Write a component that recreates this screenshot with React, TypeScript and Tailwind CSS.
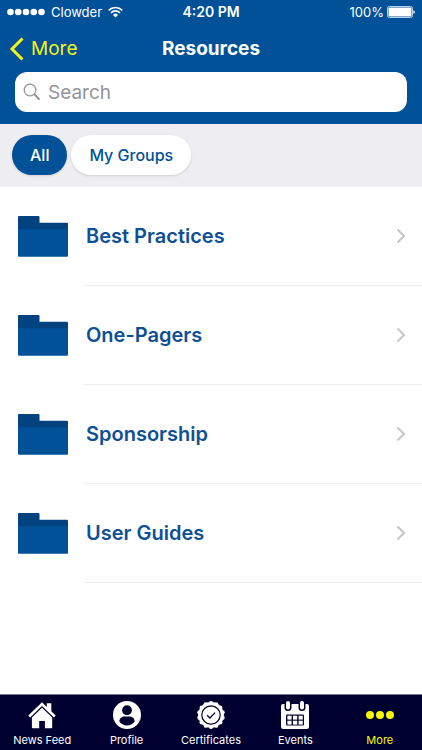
import type { ReactNode } from "react";

const FOLDERS = ["Best Practices", "One-Pagers", "Sponsorship", "User Guides"];

const BADGE_ANGLES = Array.from({ length: 14 }, (_, i) => (i * 2 * Math.PI) / 14);

function WifiIcon() {
  return (
    <svg viewBox="0 0 15 12" className="w-[15px] h-3" fill="none" stroke="currentColor" strokeWidth="1.7">
      <path d="M0.7 4.300a9.600 9.600 0 0 1 13.600 0" />
      <path d="M3 6.800a6.400 6.400 0 0 1 9 0" />
      <path d="M7.500 11.500 5 8.900a3.500 3.500 0 0 1 5 0Z" fill="currentColor" stroke="none" />
    </svg>
  );
}

function BatteryIcon() {
  return (
    <svg viewBox="0 0 28 12" className="w-7 h-3">
      <rect x="0.5" y="0.5" width="25" height="11" rx="1.8" fill="none" stroke="#b9cfe5" />
      <rect x="1.5" y="1.5" width="23" height="9" rx="0.8" fill="#fff" />
      <path d="M26.4 4.2c1 .2 1.4.9 1.4 1.8s-.4 1.6-1.4 1.8Z" fill="#fff" />
    </svg>
  );
}

function FolderIcon() {
  return (
    <svg viewBox="0 0 50 41" className="w-[50px] h-[41px] shrink-0">
      <path d="M1 0h19.500a1 1 0 0 1 1 1v5.700H49a1 1 0 0 1 1 1V15H0V1a1 1 0 0 1 1-1Z" fill="#02437f" />
      <path d="M0 13.300h50V39.700a1 1 0 0 1-1 1H1a1 1 0 0 1-1-1Z" fill="#015198" />
    </svg>
  );
}

function HomeIcon() {
  return (
    <svg viewBox="0 0 28 28" className="size-7" fill="currentColor">
      <path d="M14 1.200 18.800 5.900V2.200h4.500V10.300l4.400 4.300-1.800 1.900L14 4.900 2.100 16.500.3 14.600Z" />
      <path d="M14 6.700 24.200 16.600V26.300a1 1 0 0 1-1 1h-6.300v-7.200h-5.700v7.200H4.900a1 1 0 0 1-1-1V16.600Z" />
    </svg>
  );
}

function ProfileIcon() {
  return (
    <svg viewBox="0 0 28 28" className="size-7">
      <circle cx="14" cy="14" r="14" fill="currentColor" />
      <circle cx="14" cy="9.200" r="4.900" fill="#000030" />
      <path d="M6.400 20.500c0-3.600 2.600-5 5.200-5h4.800c2.600 0 5.200 1.400 5.200 5-1.300 2.400-4.200 3.900-7.600 3.900s-6.300-1.500-7.600-3.900Z" fill="#000030" />
    </svg>
  );
}

function CertificateIcon() {
  return (
    <svg viewBox="0 0 28 28" className="size-7" fill="none">
      <circle cx="14" cy="14" r="12.900" fill="currentColor" />
      {BADGE_ANGLES.map((a) => (
        <circle key={a} cx={14 + 11.8 * Math.sin(a)} cy={14 - 11.8 * Math.cos(a)} r="2.200" fill="currentColor" />
      ))}
      <circle cx="14" cy="14" r="9.200" stroke="#000030" strokeWidth="1.200" />
      <path d="m10.100 14.300 2.800 2.700 5.200-5.400" stroke="#000030" strokeWidth="1.300" />
    </svg>
  );
}

function CalendarIcon() {
  return (
    <svg viewBox="0 0 28 28" className="size-7">
      <rect x="0" y="3" width="28" height="25" rx="2.200" fill="currentColor" />
      <path d="M3.500 0h7v6.500a3.500 3.500 0 0 1-7 0ZM17.500 0h7v6.500a3.500 3.500 0 0 1-7 0Z" fill="#000030" />
      <rect x="5" y="0" width="4" height="8.500" rx="2" fill="currentColor" />
      <rect x="19" y="0" width="4" height="8.500" rx="2" fill="currentColor" />
      <rect x="5" y="13.500" width="18" height="11" rx="1" fill="#000030" />
      {[6.4, 12, 17.6].map((x) => (
        <g key={x} fill="currentColor">
          <rect x={x} y="14.700" width="4.200" height="3.900" />
          <rect x={x} y="19.700" width="4.200" height="3.900" />
        </g>
      ))}
    </svg>
  );
}

function MoreIcon() {
  return (
    <svg viewBox="0 0 28 28" className="size-7" fill="currentColor">
      <circle cx="4" cy="14" r="4" />
      <circle cx="14" cy="14" r="4" />
      <circle cx="24" cy="14" r="4" />
    </svg>
  );
}

const TABS: { label: string; icon: ReactNode; active?: boolean }[] = [
  { label: "News Feed", icon: <HomeIcon /> },
  { label: "Profile", icon: <ProfileIcon /> },
  { label: "Certificates", icon: <CertificateIcon /> },
  { label: "Events", icon: <CalendarIcon /> },
  { label: "More", icon: <MoreIcon />, active: true },
];

function StatusBar() {
  return (
    <div className="grid grid-cols-[1fr_auto_1fr] items-center h-6 px-[7px] text-[13px] leading-4">
      <div className="flex items-center gap-[6px]">
        <svg viewBox="0 0 38 8" className="w-[38px] h-2" fill="currentColor">
          {[3.5, 11.2, 19, 26.8, 34.5].map((x) => (
            <circle key={x} cx={x} cy="4" r="3.300" />
          ))}
        </svg>
        <span>Clowder</span>
        <WifiIcon />
      </div>
      <span className="text-center text-sm font-semibold">4:20 PM</span>
      <div className="flex items-center justify-end gap-[3px]">
        <span>100%</span>
        <BatteryIcon />
      </div>
    </div>
  );
}

export default function App() {
  return (
    <div className="min-h-screen flex flex-col bg-white font-['Inter','Liberation_Sans',sans-serif]">
      <header className="bg-[#015198] text-white pb-3">
        <StatusBar />
        <div className="grid grid-cols-[1fr_auto_1fr] items-center h-12 px-2 pt-[2px]">
          <a href="#more" className="flex items-center gap-[7px] text-[#f4f516] text-[19px]">
            <svg viewBox="0 0 16 24" className="w-4 h-6" fill="none" stroke="currentColor" strokeWidth="3">
              <path d="M14.500 1.500 4 12l10.500 10.500" />
            </svg>
            More
          </a>
          <h1 className="text-[19px] font-bold">Resources</h1>
        </div>
        <label className="flex items-center gap-[7px] h-10 mx-[15px] px-2 rounded-xl bg-white text-[#8e8e93]">
          <svg viewBox="0 0 18 18" className="w-[18px] h-[18px] shrink-0" fill="none" stroke="currentColor">
            <circle cx="7" cy="7" r="5.800" strokeWidth="1.200" />
            <path d="m11.300 11.300 5.200 5.200" strokeWidth="1.900" />
          </svg>
          <input
            type="search"
            aria-label="Search"
            placeholder="Search"
            className="flex-1 min-w-0 pt-[2px] bg-transparent text-[19px] text-gray-900 placeholder:text-[#949498] outline-none"
          />
        </label>
      </header>

      <div className="flex gap-1 px-3 pt-[11px] pb-3 bg-[#eeedf2] text-base font-medium">
        <button type="button" className="h-10 px-[18px] rounded-full bg-[#015198] text-white shadow-sm">
          All
        </button>
        <button type="button" className="h-10 px-[18px] rounded-full bg-white text-[#015198] shadow-sm">
          My Groups
        </button>
      </div>

      <main className="flex-1">
        <ul>
          {FOLDERS.map((name) => (
            <li key={name}>
              <a href="#folder" className="flex gap-4 pl-[18px]">
                <span className="flex items-center">
                  <FolderIcon />
                </span>
                <span className="flex flex-1 items-center justify-between h-[99px] pr-4 border-b border-[#ededed]">
                  <span className="pl-[2px] text-xl leading-6 font-semibold text-[#0e4f95]">{name}</span>
                  <svg viewBox="0 0 10 16" className="w-[10px] h-4" fill="none" stroke="#c7c7cc" strokeWidth="2.200">
                    <path d="m1.500 1.500 6.500 6.500-6.500 6.500" />
                  </svg>
                </span>
              </a>
            </li>
          ))}
        </ul>
      </main>

      <nav className="grid grid-cols-5 h-14 bg-[#000030] border-t border-[#77778f]">
        {TABS.map((tab) => (
          <a
            key={tab.label}
            href="#tab"
            className={`flex flex-col items-center pt-[6px] gap-[3px] text-[11px] leading-4 whitespace-nowrap ${
              tab.active ? "text-[#f8f800]" : "text-white"
            }`}
          >
            {tab.icon}
            {tab.label}
          </a>
        ))}
      </nav>
    </div>
  );
}
